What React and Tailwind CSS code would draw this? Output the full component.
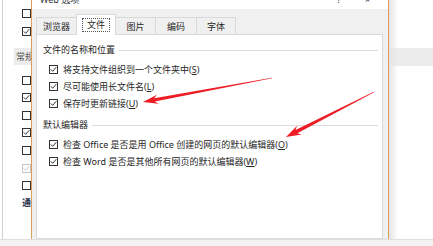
import React from "react";

function arrowPoints(tail, tip, headLen, headW, s0, s1) {
  const dx = tip[0] - tail[0];
  const dy = tip[1] - tail[1];
  const L = Math.hypot(dx, dy);
  const ux = dx / L, uy = dy / L;
  const nx = -uy, ny = ux;
  const B = [tip[0] - headLen * ux, tip[1] - headLen * uy];
  const J = [tip[0] - headLen * 0.78 * ux, tip[1] - headLen * 0.78 * uy];
  const p = [
    tip,
    [B[0] + headW * nx, B[1] + headW * ny],
    [J[0] + s0 * nx, J[1] + s0 * ny],
    [tail[0] + s1 * nx, tail[1] + s1 * ny],
    [tail[0] - s1 * nx, tail[1] - s1 * ny],
    [J[0] - s0 * nx, J[1] - s0 * ny],
    [B[0] - headW * nx, B[1] - headW * ny],
  ];
  return p.map((q) => q[0].toFixed(2) + "," + q[1].toFixed(2)).join(" ");
}

function Box({ checked, faded }) {
  const c = faded ? "#c4c4c4" : "#333333";
  return (
    <div
      className={
        "w-[9px] h-[9px] shrink-0 border bg-white flex items-center justify-center " +
        (faded ? "border-[#c4c4c4]" : "border-[#333333]")
      }
    >
      {checked && (
        <svg width="7" height="7" viewBox="0 0 7 7">
          <path d="M0.8 3.4 L2.7 5.3 L6.3 1.2" fill="none" stroke={c} strokeWidth="1" />
        </svg>
      )}
    </div>
  );
}

function Row({ text, keyChar }) {
  return (
    <div className="h-[17px] flex items-center pl-[12px]">
      <Box checked />
      <span className="ml-[5px] whitespace-nowrap">
        {text}(<span className="underline">{keyChar}</span>)
      </span>
    </div>
  );
}

function GroupLabel({ children }) {
  return (
    <div className="h-[12px] flex items-center gap-[4px] pl-[6px] pr-[4px]">
      <span className="whitespace-nowrap">{children}</span>
      <div className="flex-1 h-px bg-[#dcdcdc]" />
    </div>
  );
}

function Tab({ label, w, selected, first }) {
  return (
    <div
      className={
        "flex items-center justify-center border-t border-l border-r border-[#d9d9d9] " +
        (first ? "" : "-ml-px ") +
        (selected ? "relative z-10 h-[21px] bg-white" : "h-[18px] bg-[#f0f0f0]")
      }
      style={{ width: w }}
    >
      {selected ? (
        <span className="px-[4px] h-[14px] flex items-center border border-dotted border-[#555]">
          {label}
        </span>
      ) : (
        <span>{label}</span>
      )}
    </div>
  );
}

export default function App() {
  return (
    <div className="relative w-[433px] h-[246px] overflow-hidden bg-white flex flex-col text-[9px] leading-[12px] text-[#262626] font-['Noto_Sans','Noto_Sans_CJK_SC',sans-serif]">
      <div className="flex h-[239px]">
        {/* underlying window, left */}
        <div className="w-[31px] h-full overflow-hidden bg-white">
          <div className="ml-[2px] h-full border-l border-[#d0d0d0] pl-[19px] pt-[4px] flex flex-col">
            <div className="h-[18px] flex items-center"><Box /></div>
            <div className="h-[18px] flex items-center"><Box checked /></div>
            <div className="mt-[8px] -ml-[8px] h-[17px] bg-[#ececec] flex items-center pl-[2px] text-[#555] whitespace-nowrap">常规</div>
            <div className="mt-[6px] h-[18px] flex items-center"><Box /></div>
            <div className="h-[17.6px] flex items-center"><Box checked /></div>
            <div className="h-[17.6px] flex items-center"><Box /></div>
            <div className="h-[17.6px] flex items-center"><Box checked /></div>
            <div className="h-[17.6px] flex items-center"><Box /></div>
            <div className="h-[17.6px] flex items-center"><Box checked faded /></div>
            <div className="h-[17.6px] flex items-center"><Box /></div>
            <div className="h-[17.6px] flex items-center font-bold text-[#1b2a44] whitespace-nowrap">通</div>
          </div>
        </div>

        {/* dialog */}
        <div className="w-[358px] h-full border-l border-r border-[#dc9d5c] flex flex-col">
          <div className="h-[9px] bg-white overflow-hidden relative flex">
            <span className="ml-[8px] -mt-[6px] whitespace-nowrap text-[#333]">Web 选项</span>
            <span className="absolute left-[305px] -top-[6px] text-[#333]">?</span>
            <span className="absolute left-[333px] -top-[6px] text-[#333]">×</span>
          </div>
          <div className="flex-1 bg-[#f0f0f0] flex flex-col pt-[5px] overflow-hidden">
            <div className="flex items-end pl-[4px] h-[21px]">
              <Tab label="浏览器" w={41} first />
              <Tab label="文件" w={40} selected />
              <Tab label="图片" w={41} />
              <Tab label="编码" w={42} />
              <Tab label="字体" w={40} />
            </div>
            <div className="-mt-px ml-[4px] w-[347px] flex-1 bg-white border border-[#d9d9d9] pt-[9px] flex flex-col">
              <GroupLabel>文件的名称和位置</GroupLabel>
              <div className="mt-[5px]">
                <Row text="将支持文件组织到一个文件夹中" keyChar="S" />
                <Row text="尽可能使用长文件名" keyChar="L" />
                <Row text="保存时更新链接" keyChar="U" />
              </div>
              <div className="mt-[7px]">
                <GroupLabel>默认编辑器</GroupLabel>
              </div>
              <div className="mt-[5px]">
                <Row text="检查 Office 是否是用 Office 创建的网页的默认编辑器" keyChar="O" />
                <Row text="检查 Word 是否是其他所有网页的默认编辑器" keyChar="W" />
              </div>
            </div>
          </div>
        </div>

        {/* underlying window, right */}
        <div className="relative flex-1 h-full bg-white">
          <div className="mt-[48px] h-[18px] bg-[#ececec]" />
          <div className="absolute left-0 top-0 bottom-0 w-[9px] bg-gradient-to-r from-[#e4e4e4] to-transparent" />
        </div>
      </div>

      {/* bottom strip */}
      <div className="flex-1 bg-[#f2f2f2] border-t border-[#dedede]" />

      {/* red arrows */}
      <svg className="absolute inset-0 pointer-events-none" width="433" height="246" viewBox="0 0 433 246">
        <polygon points={arrowPoints([272, 78], [143, 102], 15, 4.5, 1.7, 0.3)} fill="#ee1c24" />
        <polygon points={arrowPoints([374, 92], [286, 137], 15, 5, 1.9, 0.4)} fill="#ee1c24" />
      </svg>
    </div>
  );
}
